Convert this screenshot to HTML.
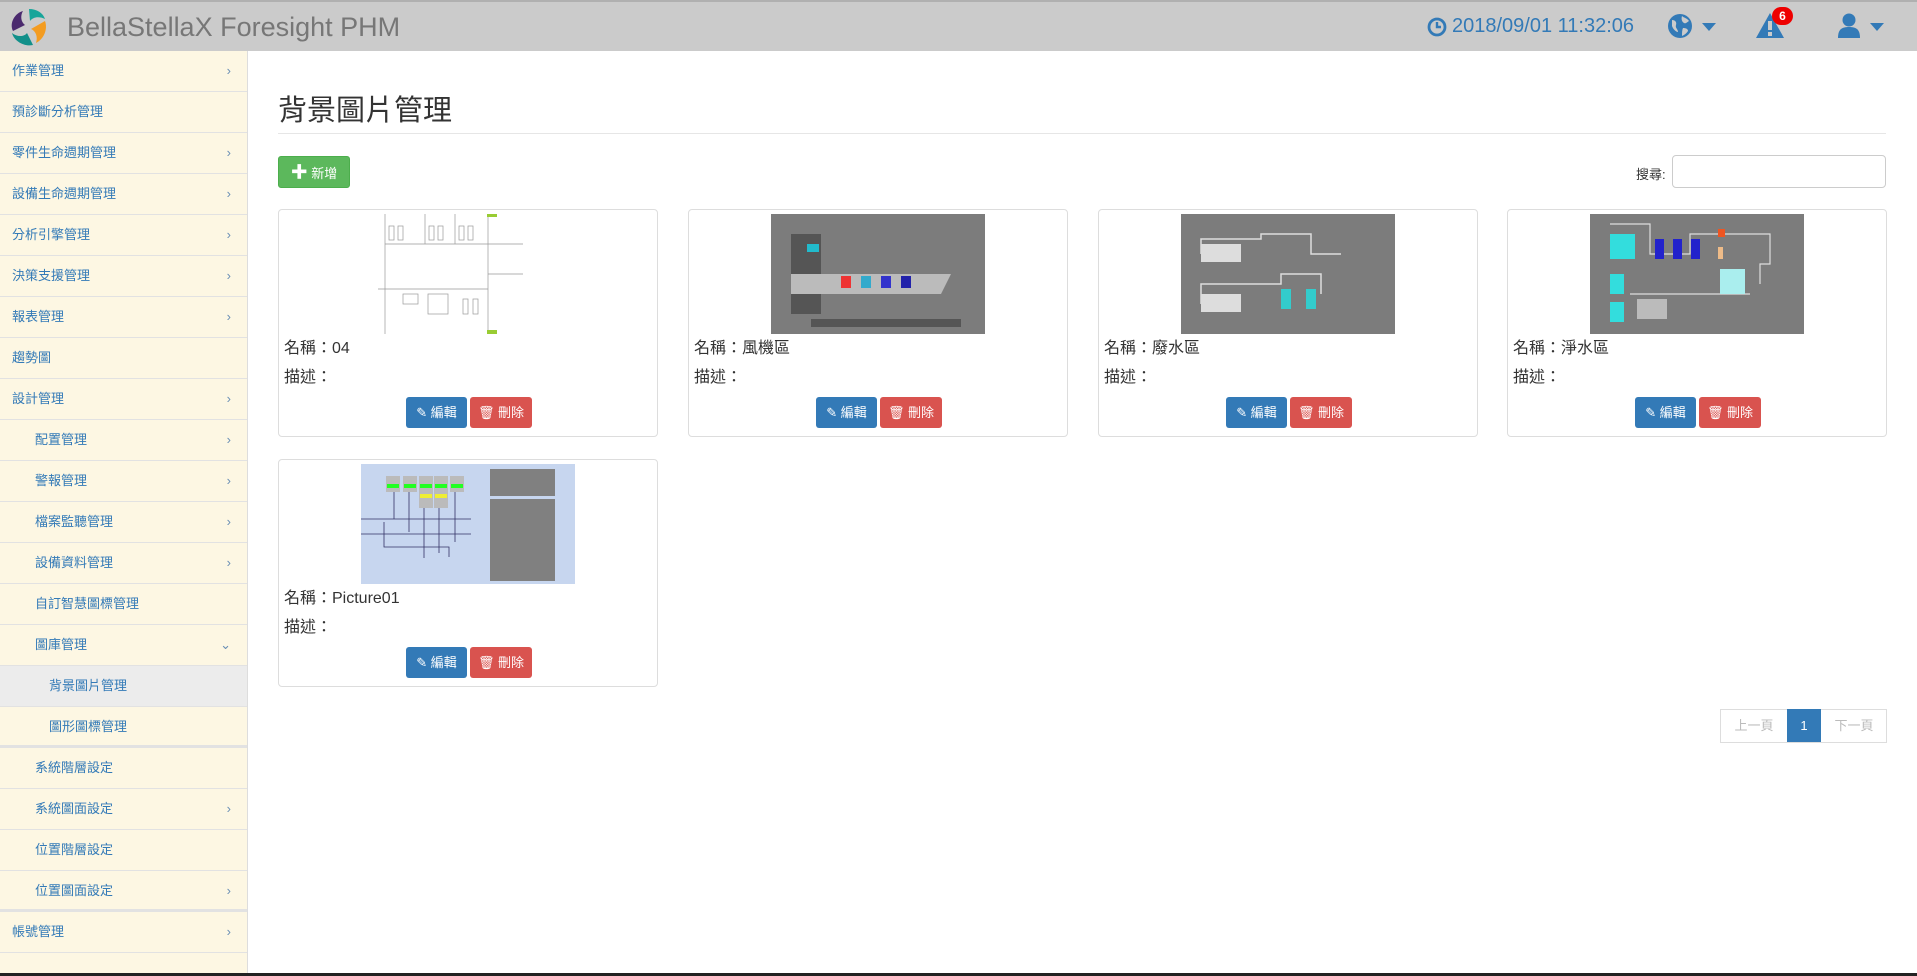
<!DOCTYPE html>
<html><head><meta charset="utf-8"><style>
*{box-sizing:border-box;margin:0;padding:0}
body{width:1917px;height:976px;overflow:hidden;font-family:"Liberation Sans","Noto Sans CJK TC",sans-serif;background:#fff;position:relative;color:#333}
.hdr{position:absolute;left:0;top:0;width:1917px;height:51px;background:#cbcbcb;border-top:2px solid #b0b0b0}
.title{position:absolute;left:67px;top:10px;font-size:27px;color:#777}
.blue{color:#337ab7}
.side{position:absolute;left:0;top:51px;width:248px;height:925px;background:#fdf7e3;border-right:1px solid #ddd}
.side .it{height:41px;border-bottom:1px solid #e2e2e2;font-size:13px;color:#337ab7;line-height:40px;position:relative}
.side .it .ar{position:absolute;right:16px;top:0;color:#6a8fb5;font-size:13px}
.l1{padding-left:12px}.l2{padding-left:35px}.l3{padding-left:49px}
.main h1{position:absolute;left:278px;top:87px;font-size:29px;font-weight:normal;color:#333}
.hr{position:absolute;left:278px;top:133px;width:1608px;height:1px;background:#e6e6e6}
.btn{position:absolute;border-radius:3px;color:#fff;font-size:13px;text-align:center}
.card{position:absolute;width:380px;height:228px;border:1px solid #ddd;border-radius:4px;background:#fff}
.card .img{position:absolute;top:4px;height:120px}
.card .n{position:absolute;left:5px;top:124px;font-size:16px}
.card .d{position:absolute;left:5px;top:153px;font-size:16px}
.card .e{left:127px;top:187px;width:61px;height:31px;background:#337ab7;line-height:31px}
.card .x{left:191px;top:187px;width:62px;height:31px;background:#d9534f;line-height:31px}
</style></head><body>
<div class="hdr">
<svg style="position:absolute;left:7px;top:3px" width="44" height="44" viewBox="0 0 44 44"><path d="M22 4c8 0 14 4 16 10-6-3-12-2-15 2z" fill="#17a59a"/><path d="M38 16c3 8-1 18-9 22 2-6 0-12-5-14z" fill="#f39c21"/><path d="M26 40c-9 2-19-4-21-12 5 4 12 4 15 0z" fill="#12908a"/><path d="M6 26C2 18 8 8 16 6c-3 5-2 11 2 14z" fill="#4b2a6e"/></svg>
<div class="title">BellaStellaX Foresight PHM</div>
<svg style="position:absolute;left:1427px;top:15px" width="20" height="20" viewBox="0 0 20 20"><circle cx="10" cy="10" r="8" fill="none" stroke="#337ab7" stroke-width="2.8"/><path d="M10 5v5h4" fill="none" stroke="#337ab7" stroke-width="2.4"/></svg>
<div class="blue" style="position:absolute;left:1452px;top:13px;font-size:20px">2018/09/01 11:32:06</div>
<svg style="position:absolute;left:1667px;top:11px" width="26" height="26" viewBox="0 0 26 26"><circle cx="13" cy="13" r="12" fill="#337ab7"/><path d="M5 7c3 0 5 2 4 5s2 4 2 7c-2 0-5-3-6-6zM15 3c2 2 5 2 7 5-2 1-3 3-5 2s-3-4-2-7zM16 15c3 0 5 1 5 3-2 3-4 4-6 5 0-3 0-6 1-8z" fill="#cbcbcb"/></svg>
<div style="position:absolute;left:1702px;top:21px;border:7px solid transparent;border-top:8px solid #337ab7"></div>
<svg style="position:absolute;left:1755px;top:10px" width="30" height="27" viewBox="0 0 30 27"><path d="M15 1L29 26H1z" fill="#337ab7"/><rect x="13" y="9" width="4" height="9" fill="#cbcbcb"/><rect x="13" y="20" width="4" height="4" fill="#cbcbcb"/></svg>
<div style="position:absolute;left:1772px;top:5px;width:21px;height:18px;border-radius:9px;background:#e00;color:#fff;font-size:12px;font-weight:bold;text-align:center;line-height:18px">6</div>
<svg style="position:absolute;left:1837px;top:11px" width="24" height="25" viewBox="0 0 24 25"><circle cx="12" cy="7" r="6.5" fill="#337ab7"/><path d="M1 25c0-9 4-11 11-11s11 2 11 11z" fill="#337ab7"/></svg>
<div style="position:absolute;left:1870px;top:21px;border:7px solid transparent;border-top:8px solid #337ab7"></div>
</div>
<div class="side">
<div class="it l1">作業管理<span class="ar">›</span></div>
<div class="it l1">預診斷分析管理</div>
<div class="it l1">零件生命週期管理<span class="ar">›</span></div>
<div class="it l1">設備生命週期管理<span class="ar">›</span></div>
<div class="it l1">分析引擎管理<span class="ar">›</span></div>
<div class="it l1">決策支援管理<span class="ar">›</span></div>
<div class="it l1">報表管理<span class="ar">›</span></div>
<div class="it l1">趨勢圖</div>
<div class="it l1">設計管理<span class="ar">›</span></div>
<div class="it l2">配置管理<span class="ar">›</span></div>
<div class="it l2">警報管理<span class="ar">›</span></div>
<div class="it l2">檔案監聽管理<span class="ar">›</span></div>
<div class="it l2">設備資料管理<span class="ar">›</span></div>
<div class="it l2">自訂智慧圖標管理</div>
<div class="it l2">圖庫管理<span class="ar">⌄</span></div>
<div class="it l3" style="background:#ececec">背景圖片管理</div>
<div class="it l3" style="border-bottom:3px solid #e2e2e2">圖形圖標管理</div>
<div class="it l2">系統階層設定</div>
<div class="it l2">系統圖面設定<span class="ar">›</span></div>
<div class="it l2">位置階層設定</div>
<div class="it l2" style="border-bottom:3px solid #e2e2e2">位置圖面設定<span class="ar">›</span></div>
<div class="it l1">帳號管理<span class="ar">›</span></div>
</div>
<div style="position:absolute;left:0;top:973px;width:1917px;height:3px;background:#222"></div>
<div class="main">
<h1>背景圖片管理</h1>
<div class="hr"></div>
<div class="btn" style="left:278px;top:156px;width:72px;height:32px;background:#5cb85c;line-height:32px;border:1px solid #4cae4c"><b style="font-size:17px">✚</b> 新增</div>
<div style="position:absolute;left:1636px;top:164px;font-size:13px">搜尋:</div>
<div style="position:absolute;left:1672px;top:155px;width:214px;height:33px;border:1px solid #ccc;border-radius:4px"></div>

<div class="card" style="left:278px;top:209px"><svg class="img" style="left:84px;width:161px" viewBox="0 0 161 120"><rect width="161" height="120" fill="#fff"/><g fill="none" stroke="#999" stroke-width=".7"><path d="M22 0v120M125 0v120M22 30h103M15 75h110M62 0v30M92 0v30M125 30h35M125 60h35"/><rect x="26" y="12" width="5" height="14"/><rect x="35" y="12" width="5" height="14"/><rect x="66" y="12" width="5" height="14"/><rect x="75" y="12" width="5" height="14"/><rect x="96" y="12" width="5" height="14"/><rect x="105" y="12" width="5" height="14"/><rect x="40" y="80" width="15" height="10"/><rect x="65" y="80" width="20" height="20"/><rect x="100" y="85" width="5" height="15"/><rect x="110" y="85" width="5" height="15"/></g><rect x="124" y="0" width="10" height="3" fill="#9c3"/><rect x="124" y="116" width="10" height="4" fill="#9c3"/></svg>
<div class="n">名稱：04</div><div class="d">描述：</div>
<div class="btn e">✎ 編輯</div><div class="btn x">🗑 刪除</div></div>

<div class="card" style="left:688px;top:209px"><svg class="img" style="left:82px;width:214px" viewBox="0 0 214 120"><rect width="214" height="120" fill="#7c7c7c"/><rect x="20" y="20" width="30" height="80" fill="#555"/><rect x="36" y="30" width="12" height="8" fill="#2bc"/><path d="M20 60h160l-10 20H20z" fill="#bbb"/><rect x="70" y="62" width="10" height="12" fill="#e33"/><rect x="90" y="62" width="10" height="12" fill="#3ac"/><rect x="110" y="62" width="10" height="12" fill="#33c"/><rect x="130" y="62" width="10" height="12" fill="#22a"/><rect x="40" y="105" width="150" height="8" fill="#555"/></svg>
<div class="n">名稱：風機區</div><div class="d">描述：</div>
<div class="btn e">✎ 編輯</div><div class="btn x">🗑 刪除</div></div>

<div class="card" style="left:1098px;top:209px"><svg class="img" style="left:82px;width:214px" viewBox="0 0 214 120"><rect width="214" height="120" fill="#7c7c7c"/><g fill="none" stroke="#ddd" stroke-width="1.5"><path d="M20 40v-15h60v-5h50v20h30M20 90v-20h80v-10h40v20"/></g><rect x="20" y="30" width="40" height="18" fill="#ddd"/><rect x="20" y="80" width="40" height="18" fill="#ddd"/><rect x="100" y="75" width="10" height="20" fill="#3cc"/><rect x="125" y="75" width="10" height="20" fill="#3cc"/></svg>
<div class="n">名稱：廢水區</div><div class="d">描述：</div>
<div class="btn e">✎ 編輯</div><div class="btn x">🗑 刪除</div></div>

<div class="card" style="left:1507px;top:209px"><svg class="img" style="left:82px;width:214px" viewBox="0 0 214 120"><rect width="214" height="120" fill="#7c7c7c"/><g fill="none" stroke="#ddd" stroke-width="1.2"><path d="M20 10h40v30h40V20h80v30h-10v20M40 80h120"/></g><rect x="20" y="20" width="25" height="25" fill="#3dd"/><rect x="65" y="25" width="9" height="20" fill="#22c"/><rect x="83" y="25" width="9" height="20" fill="#22c"/><rect x="101" y="25" width="9" height="20" fill="#22c"/><rect x="128" y="15" width="7" height="8" fill="#e52"/><rect x="128" y="33" width="5" height="12" fill="#eb8"/><rect x="130" y="55" width="25" height="25" fill="#aee"/><rect x="20" y="60" width="14" height="20" fill="#3dd"/><rect x="20" y="88" width="14" height="20" fill="#3dd"/><rect x="47" y="85" width="30" height="20" fill="#bbb"/></svg>
<div class="n">名稱：淨水區</div><div class="d">描述：</div>
<div class="btn e">✎ 編輯</div><div class="btn x">🗑 刪除</div></div>

<div class="card" style="left:278px;top:459px"><svg class="img" style="left:82px;width:214px" viewBox="0 0 214 120"><rect width="214" height="120" fill="#c7d6ef"/><g fill="#bbb"><rect x="25" y="12" width="14" height="16"/><rect x="42" y="12" width="14" height="16"/><rect x="58" y="12" width="14" height="32"/><rect x="73" y="12" width="14" height="32"/><rect x="89" y="12" width="14" height="16"/></g><g fill="#2f2"><rect x="26" y="20" width="12" height="4"/><rect x="43" y="20" width="12" height="4"/><rect x="59" y="20" width="12" height="4"/><rect x="74" y="20" width="12" height="4"/><rect x="90" y="20" width="12" height="4"/></g><rect x="59" y="30" width="12" height="4" fill="#ee3"/><rect x="74" y="30" width="12" height="4" fill="#ee3"/><rect x="129" y="5" width="65" height="27" fill="#808080"/><rect x="129" y="35" width="65" height="82" fill="#808080"/><g stroke="#336" stroke-width=".8" fill="none"><path d="M0 55h110M0 70h110M33 28v27M48 28v40M63 44v50M78 44v45M94 28v50M23 58v25h65v10"/></g></svg>
<div class="n">名稱：Picture01</div><div class="d">描述：</div>
<div class="btn e">✎ 編輯</div><div class="btn x">🗑 刪除</div></div>

<div style="position:absolute;left:1720px;top:709px;width:167px;height:34px;border:1px solid #ddd;font-size:13px;color:#bbb">
<span style="position:absolute;left:0;width:66px;text-align:center;line-height:32px">上一頁</span>
<span style="position:absolute;left:66px;width:34px;height:33px;top:-1px;background:#337ab7;color:#fff;text-align:center;line-height:34px">1</span>
<span style="position:absolute;left:100px;width:66px;text-align:center;line-height:32px">下一頁</span>
</div>
</div>
</body></html>
